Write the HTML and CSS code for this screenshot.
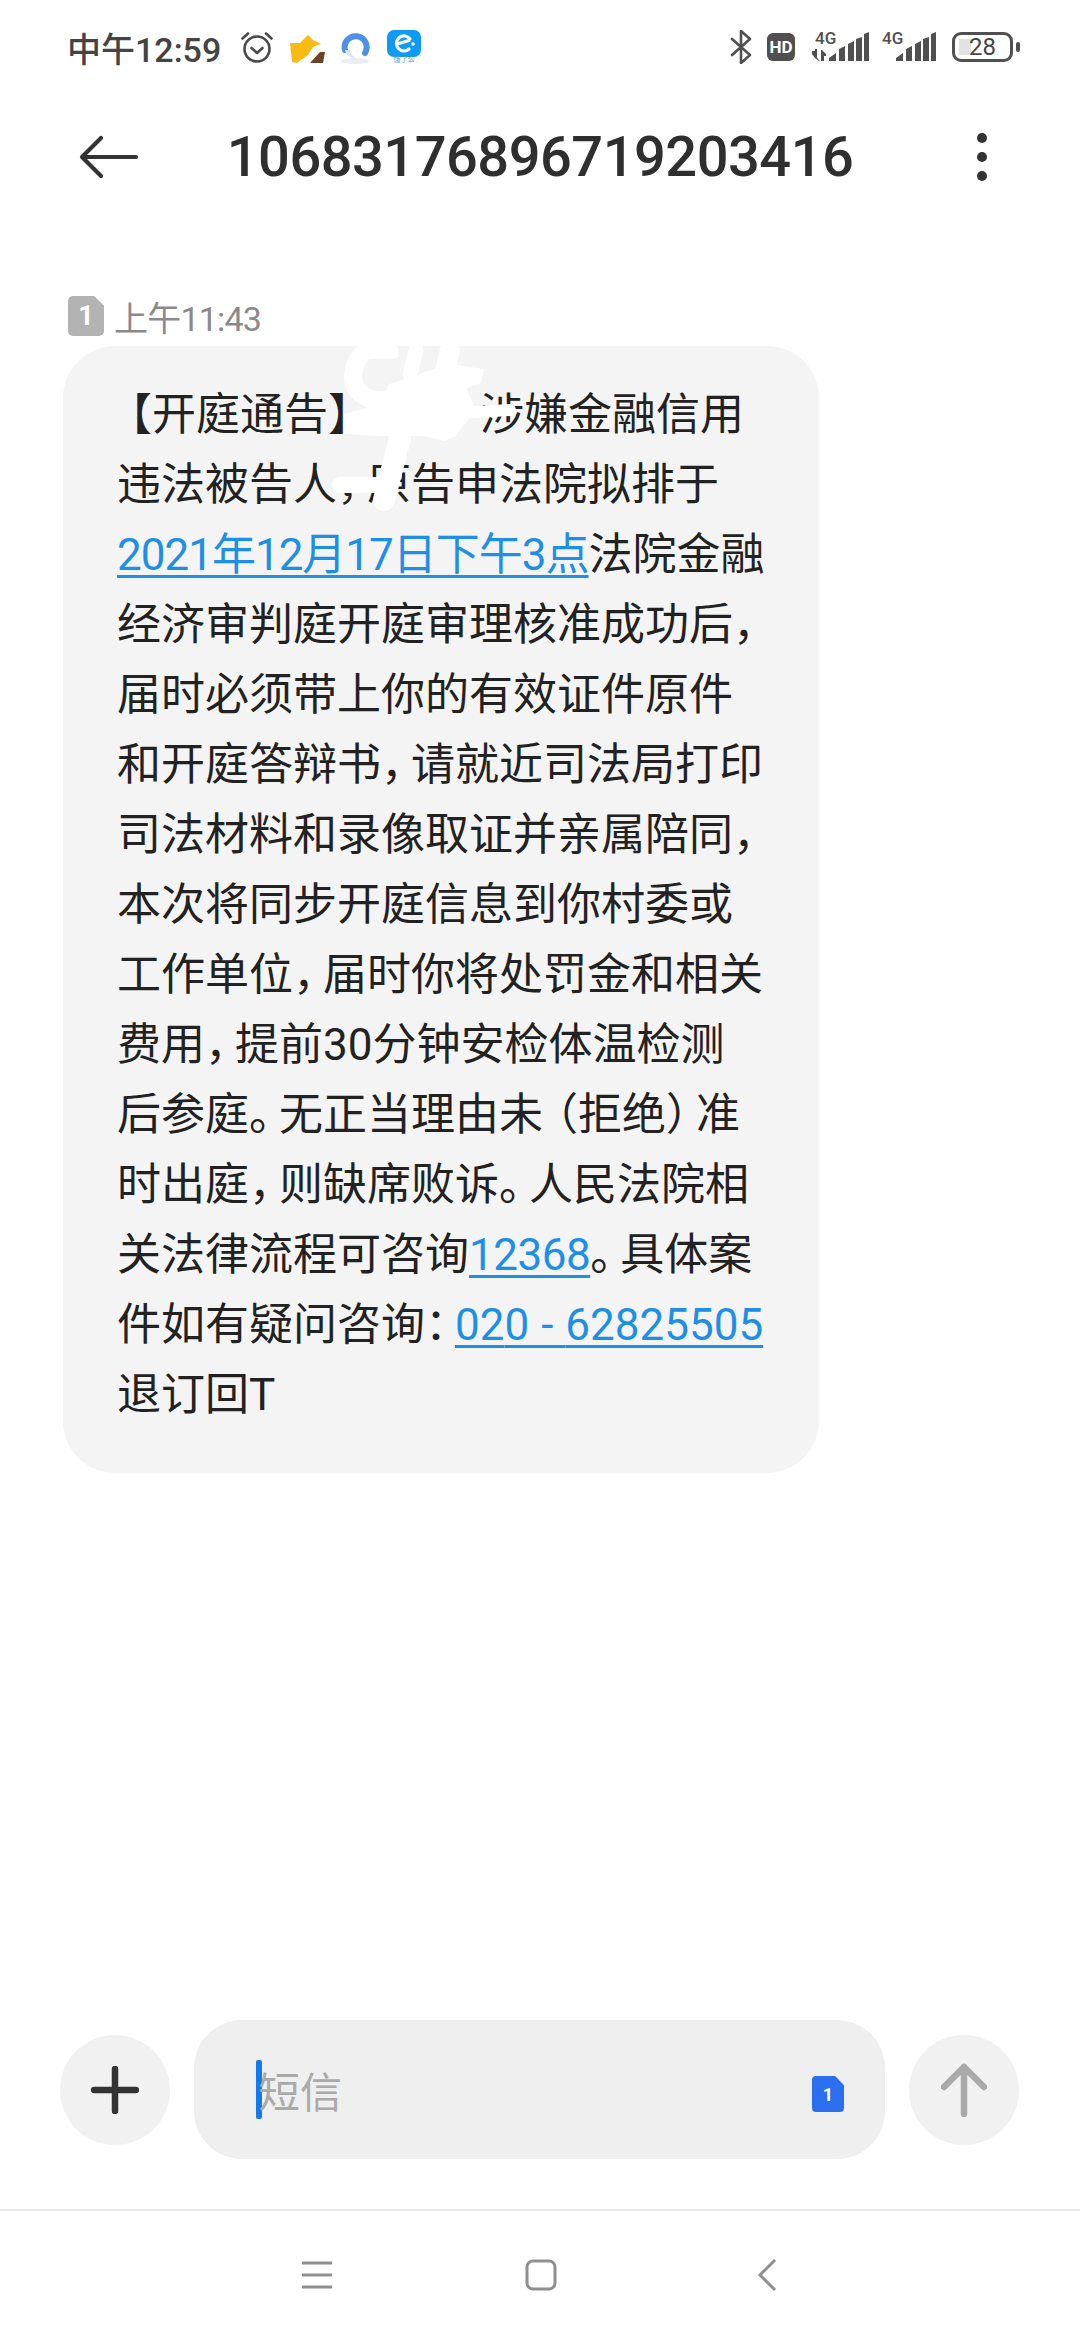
FILE: index.html
```html
<!DOCTYPE html>
<html lang="zh-CN">
<head>
    <meta charset="UTF-8">
    <meta name="viewport" content="width=device-width, initial-scale=1.0">
    <title>短信</title>
    <link rel="stylesheet" href="styles.css">
</head>
<body>
    <div class="screen">
        <!-- ステータスバー -->
        <div class="status-bar">
            <div class="status-left">
                <span class="clock">中午12:59</span>
                <svg class="icon-alarm" width="34" height="34" viewBox="0 0 34 34" fill="none" stroke="#4a4a4a" stroke-width="2.6" stroke-linecap="round" stroke-linejoin="round">
                    <circle cx="17" cy="19" r="12.5"/>
                    <path d="M11.5 18l5.5 5 5.500-5"/>
                    <path d="M2.5 8.500L8 3.500M31.500 8.500L26 3.500"/>
                </svg>
                <svg class="icon-app" width="36" height="34" viewBox="0 0 36 34">
                    <path d="M0 13h10l8-8 5 5 8 4-8 3-5 8-11 8-5-1z" fill="#f7bb13"/>
                    <path d="M20 33l10-11h5l-2 11z" fill="#6b4426"/>
                </svg>
                <svg class="icon-app icon-swirl" width="30" height="34" viewBox="0 0 30 34">
                    <ellipse cx="14" cy="31" rx="14" ry="3" fill="#e9eef5"/>
                    <path d="M4 20a11 11 0 1 1 20 3" fill="none" stroke="#4f8fe6" stroke-width="6" stroke-linecap="round"/>
                    <path d="M4 20c1 5 5 8 11 8-4-2-6-5-6-8z" fill="#d5e4f7"/>
                </svg>
                <div class="icon-ele">
                    <svg width="34" height="27" viewBox="0 0 34 27">
                        <rect width="34" height="27" rx="7" fill="#0f9bf5"/>
                        <path d="M23 9a7.500 7.500 0 1 0-1 10M10 14l12-3.500" fill="none" stroke="#fff" stroke-width="3.200" stroke-linecap="round"/>
                        <circle cx="26" cy="14" r="1.800" fill="#fff"/>
                    </svg>
                    <span class="ele-label">饿了么</span>
                </div>
            </div>
            <div class="status-right">
                <svg class="icon-bt" width="22" height="34" viewBox="0 0 22 34" fill="none" stroke="#505050" stroke-width="2.600" stroke-linecap="round" stroke-linejoin="round">
                    <path d="M2 9l18 16-9 8V1l9 8L2 25"/>
                </svg>
                <span class="hd">HD</span>
                <div class="signal">
                    <span class="net">4G</span>
                    <svg width="57" height="30" viewBox="0 0 57 30" fill="#505050">
                        <path d="M0 19h3v-2h2v9l3 3h-1l-4-3-3-4zM9 29V18h1l4 4v2h-2v5z"/>
                        <path d="M17 29v-3l7-5v8zM27 29V17l6-3v15zM36 29V12l6-3v20zM44 29V7l6-2v24zM52 29V2l5-2v29z"/>
                    </svg>
                </div>
                <div class="signal">
                    <span class="net">4G</span>
                    <svg width="57" height="30" viewBox="0 0 57 30" fill="#505050">
                        <path d="M17 29v-3l7-5v8zM27 29V17l6-3v15zM36 29V12l6-3v20zM44 29V7l6-2v24zM52 29V2l5-2v29z"/>
                    </svg>
                </div>
                <div class="battery">
                    <div class="battery-body">
                        <span class="battery-fill"></span>
                        <span class="battery-num">28</span>
                    </div>
                    <span class="battery-nub"></span>
                </div>
            </div>
        </div>

        <!-- ヘッダー -->
        <header class="top-bar">
            <svg class="back" width="60" height="44" viewBox="0 0 60 44" fill="none" stroke="#333" stroke-width="4.200" stroke-linecap="round" stroke-linejoin="round">
                <path d="M57 22H4M22 3L3 22l19 19"/>
            </svg>
            <h1 class="title">10683176896719203416</h1>
            <div class="more"><span></span><span></span><span></span></div>
        </header>

        <!-- メッセージ -->
        <main class="thread">
            <div class="msg-meta">
                <span class="sim-tag">1</span>
                <span class="msg-time">上午11:43</span>
            </div>
            <div class="bubble">
                <p class="msg-text">
                    <span class="line"><span class="pn-open">【</span>开庭通告<span class="pn">】</span><span class="redacted-gap"></span>涉嫌金融信用</span>
                    <span class="line">违法被告人<span class="pn">，</span>原告申法院拟排于</span>
                    <span class="line"><a class="link-date" href="#">2021年12月17日下午3点</a>法院金融</span>
                    <span class="line">经济审判庭开庭审理核准成功后<span class="pn">，</span></span>
                    <span class="line">届时必须带上你的有效证件原件</span>
                    <span class="line">和开庭答辩书<span class="pn">，</span>请就近司法局打印</span>
                    <span class="line">司法材料和录像取证并亲属陪同<span class="pn">，</span></span>
                    <span class="line">本次将同步开庭信息到你村委或</span>
                    <span class="line">工作单位<span class="pn">，</span>届时你将处罚金和相关</span>
                    <span class="line">费用<span class="pn">，</span>提前30分钟安检体温检测</span>
                    <span class="line">后参庭<span class="pn">。</span>无正当理由<span class="tight">未</span>（拒绝<span class="pn">）</span>准</span>
                    <span class="line">时出庭<span class="pn">，</span>则缺席败诉<span class="pn">。</span>人民法院相</span>
                    <span class="line">关法律流程可咨询<a class="link-short" href="#">12368</a><span class="pn">。</span>具体案</span>
                    <span class="line">件如有疑问咨询<span class="pn">：</span><a href="#">02<span class="dash">0-</span>62825505</a></span>
                    <span class="line">退订回T</span>
                </p>
                <svg class="scribble" width="200" height="180" viewBox="0 0 200 180" fill="none" stroke="#fff" stroke-linecap="round" stroke-linejoin="round">
                    <path d="M70 45L130 25L163 30L160 42L145 48L155 70L135 95L125 100L105 95L60 95L25 93L25 75L60 65Z" fill="#fff" stroke-width="2"/>
                    <path d="M46 10C32 22 30 40 37 50C44 58 56 62 68 60" stroke-width="18"/>
                    <path d="M44 12H72" stroke-width="14"/>
                    <path d="M96 10L90 34" stroke-width="15"/>
                    <path d="M130 10L122 44" stroke-width="20"/>
                    <path d="M140 73L190 70" stroke-width="12"/>
                    <path d="M80 98L64 160" stroke-width="22"/>
                    <path d="M20 145H60" stroke-width="16"/>
                </svg>
            </div>
        </main>

        <!-- 入力欄 -->
        <div class="composer">
            <button class="round-btn" type="button">
                <svg width="48" height="48" viewBox="0 0 48 48" fill="none" stroke="#333" stroke-width="6.500" stroke-linecap="round">
                    <path d="M24 3v42M3 24h42"/>
                </svg>
            </button>
            <div class="input-box">
                <span class="caret"></span>
                <span class="placeholder">短信</span>
                <span class="sim-btn">1</span>
            </div>
            <button class="round-btn" type="button">
                <svg width="46" height="54" viewBox="0 0 46 54" fill="none" stroke="#aaa" stroke-width="6.500" stroke-linecap="round" stroke-linejoin="round">
                    <path d="M23 51V4M3 24L23 4l20 20"/>
                </svg>
            </button>
        </div>

        <!-- ナビゲーションバー -->
        <nav class="nav-bar">
            <svg width="32" height="30" viewBox="0 0 32 30" fill="none" stroke="#8f8f8f" stroke-width="3">
                <path d="M1 3h30M1 15h30M1 27h30"/>
            </svg>
            <svg class="nav-home" width="32" height="32" viewBox="0 0 32 32" fill="none" stroke="#8f8f8f" stroke-width="3">
                <rect x="2" y="2" width="28" height="28" rx="6"/>
            </svg>
            <svg width="20" height="34" viewBox="0 0 20 34" fill="none" stroke="#8f8f8f" stroke-width="3">
                <path d="M18 2L3 17l15 15"/>
            </svg>
        </nav>
    </div>
</body>
</html>
```

FILE: styles.css
```css
/* 全体 */
* {
    box-sizing: border-box;
}

body {
    margin: 0;
    background-color: #fff;
    color: #222;
    font-family: Roboto, "Noto Sans CJK SC", sans-serif;
}

.screen {
    width: 1080px;
    height: 2340px;
    display: flex;
    flex-direction: column;
    overflow: hidden;
}

/* ステータスバー */
.status-bar {
    height: 94px;
    padding: 0 60px 0 67px;
    display: flex;
    justify-content: space-between;
    align-items: center;
}

.status-left {
    display: flex;
    align-items: center;
}

.clock {
    font-size: 34px;
    font-weight: 500;
    color: #444;
    margin-right: 18px;
    width: 155px;
    white-space: nowrap;
}

.icon-alarm {
    margin-right: 16px;
}

.icon-app {
    margin-right: 15px;
}

.icon-swirl {
    margin-right: 16px;
}

.icon-ele {
    width: 34px;
    height: 34px;
    display: flex;
    flex-direction: column;
    align-items: center;
}

.icon-ele svg {
    display: block;
}

.ele-label {
    font-size: 7px;
    line-height: 7px;
    color: #5a9ad8;
}

.status-right {
    display: flex;
    align-items: center;
}

.hd {
    width: 28px;
    height: 28px;
    margin: 0 17px 0 15px;
    background-color: #505050;
    border-radius: 6px;
    color: #fff;
    font-size: 17px;
    font-weight: 700;
    line-height: 28px;
    text-align: center;
}

.signal {
    position: relative;
    width: 57px;
    height: 30px;
    margin-right: 10px;
}

.signal:nth-of-type(n) + .battery {
    margin-left: 6px;
}

.signal svg {
    display: block;
}

.net {
    position: absolute;
    left: 3px;
    top: -3px;
    font-size: 17px;
    font-weight: 500;
    line-height: 18px;
    color: #505050;
}

.battery {
    display: flex;
    align-items: center;
}

.battery-body {
    position: relative;
    width: 61px;
    height: 30px;
    border: 3px solid #505050;
    border-radius: 9px;
    text-align: center;
    font-size: 24px;
    line-height: 24px;
    color: #444;
}

.battery-fill {
    position: absolute;
    left: 4px;
    top: 4px;
    bottom: 4px;
    width: 12px;
    background-color: #e2e2e2;
}

.battery-num {
    position: relative;
}

.battery-nub {
    width: 4px;
    height: 10px;
    margin-left: 3px;
    background-color: #505050;
    border-radius: 2px;
}

/* ヘッダー */
.top-bar {
    height: 126px;
    padding: 0 79px;
    display: flex;
    align-items: center;
}

.back {
    flex-shrink: 0;
}

.title {
    flex: 1;
    margin: 0;
    font-size: 56px;
    font-weight: 500;
    letter-spacing: -0.5px;
    color: #2f2f2f;
    line-height: 1;
    text-align: center;
}

.more {
    width: 60px;
    padding-right: 14px;
    display: flex;
    flex-direction: column;
    align-items: flex-end;
    gap: 9px;
}

.more span {
    width: 10px;
    height: 10px;
    background-color: #333;
    border-radius: 50%;
}

/* メッセージ */
.thread {
    flex: 1;
    padding: 76px 0 0 63px;
}

.msg-meta {
    display: flex;
    align-items: center;
    gap: 10px;
    height: 40px;
    margin: 0 0 10px 5px;
}

.sim-tag {
    width: 36px;
    height: 40px;
    background-color: #b3b3b3;
    border-radius: 5px;
    clip-path: polygon(0 0, 72% 0, 100% 24%, 100% 100%, 0 100%);
    color: #fff;
    font-size: 27px;
    font-weight: 700;
    line-height: 40px;
    text-align: center;
}

.msg-time {
    font-size: 34px;
    letter-spacing: -0.8px;
    color: #8a8a8a;
}

.bubble {
    position: relative;
    width: 756px;
    padding: 34px 40px 43px 54px;
    background-color: #f4f4f4;
    border-radius: 52px;
}

.msg-text {
    margin: 0;
    font-size: 44px;
    line-height: 70px;
    color: #222;
}

.line {
    display: block;
    white-space: nowrap;
}

/* 約物は全角より詰める */
.pn {
    letter-spacing: -14px;
}

.pn-open {
    margin-left: -9px;
}

.tight {
    letter-spacing: -9px;
}

.msg-text a {
    color: #1e8fe6;
    text-decoration: underline;
    text-decoration-thickness: 3px;
    text-underline-offset: 5px;
}

.msg-text .link-date {
    letter-spacing: -1px;
}

.msg-text .link-short {
    letter-spacing: -0.5px;
}

.dash {
    letter-spacing: 12px;
}

.redacted-gap {
    display: inline-block;
    width: 122px;
}

.scribble {
    position: absolute;
    left: 257px;
    top: -6px;
}

/* 入力欄 */
.composer {
    height: 139px;
    margin-bottom: 50px;
    padding: 0 61px 0 60px;
    display: flex;
    align-items: center;
    gap: 24px;
}

.round-btn {
    width: 110px;
    height: 110px;
    flex-shrink: 0;
    padding: 0;
    border: none;
    border-radius: 50%;
    background-color: #f1f1f1;
    display: flex;
    align-items: center;
    justify-content: center;
}

.input-box {
    position: relative;
    flex: 1;
    height: 139px;
    padding-left: 62px;
    background-color: #efefef;
    border-radius: 48px;
    display: flex;
    align-items: center;
}

.caret {
    width: 6px;
    height: 59px;
    background-color: #1479ea;
    border-radius: 2px;
}

.placeholder {
    margin-left: -4px;
    font-size: 42px;
    color: #aaa;
}

.sim-btn {
    position: absolute;
    right: 41px;
    top: 56px;
    width: 32px;
    height: 36px;
    background-color: #2b6ff0;
    border-radius: 4px;
    clip-path: polygon(0 0, 72% 0, 100% 26%, 100% 100%, 0 100%);
    color: #fff;
    font-size: 18px;
    font-weight: 700;
    line-height: 38px;
    text-align: center;
}

/* ナビゲーションバー */
.nav-bar {
    height: 131px;
    padding: 0 303px 2px 301px;
    border-top: 2px solid #e6e6e6;
    display: flex;
    justify-content: space-between;
    align-items: center;
}

.nav-home {
    margin-right: 8px;
}
```
